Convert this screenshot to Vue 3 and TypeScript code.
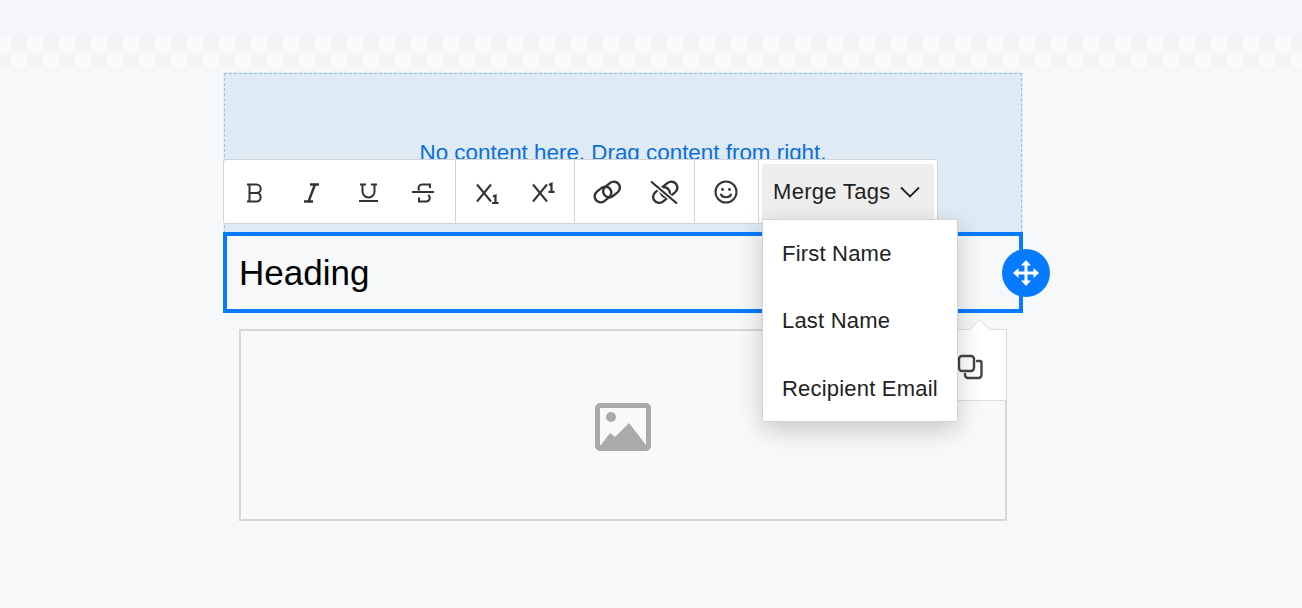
<script setup lang="ts">
const tags: string[] = ['First Name', 'Last Name', 'Recipient Email']
</script>

<template>
  <div class="page">
    <div class="checker"></div>
    <div class="canvas">
      <div class="drop">No content here. Drag content from right.</div>
      <div class="heading">Heading</div>
      <div class="imgwrap">
        <div class="imgbox">
          <svg class="imgicon" width="58" height="50" viewBox="0 0 58 50">
            <path fill="#aaa" fill-rule="evenodd" d="M6 1h46a5 5 0 0 1 5 5v38a5 5 0 0 1-5 5H6a5 5 0 0 1-5-5V6a5 5 0 0 1 5-5zM6 6v37h46V6z"/>
            <circle cx="17" cy="15" r="5" fill="#aaa"/>
            <path fill="#aaa" d="M7 43l9-12 5 4 14-14 17 22z"/>
          </svg>
        </div>
      </div>

      <div class="mini">
        <svg width="28" height="28" viewBox="0 0 28 28" fill="none" stroke="#444" stroke-width="2.400">
          <rect x="2" y="2" width="15" height="15" rx="3"/>
          <path d="M20 7h3a1.500 1.500 0 0 1 1.500 1.500V21a3 3 0 0 1-3 3H11a3 3 0 0 1-3-3v-1" stroke-linecap="round"/>
        </svg>
      </div>

      <div class="toolbar">
        <div class="group g1">
          <span class="ic">
            <svg class="glyph" width="32" height="24" viewBox="0 0 32 24">
              <path d="M8 4.500h9.500a4 4 0 0 1 0 8.500H10.500M10.500 13H18a4.300 4.300 0 0 1 0 8.500H8M10.500 4.500v17"/>
            </svg>
          </span>
          <span class="ic">
            <svg class="glyph" width="32" height="24" viewBox="0 0 32 24">
              <path d="M15 4.500h9M9 21.500h9M20 4.500l-6.500 17" stroke-width="2.400"/>
            </svg>
          </span>
          <span class="ic">
            <svg class="glyph" width="32" height="24" viewBox="0 0 32 24">
              <path d="M9 4.500h6M20 4.500h6M11.500 4.500v7a6 6 0 0 0 12 0v-7M8 21h19"/>
            </svg>
          </span>
          <span class="ic">
            <svg class="glyph" width="32" height="24" viewBox="0 0 32 24">
              <path d="M5 12h22M23 8V4.500h-8a3.500 3.500 0 0 0-2.500 6M21 15a3.500 3.500 0 0 1-2 6.500h-7v-4"/>
            </svg>
          </span>
        </div>
        <div class="group g2">
          <span class="ic">
            <svg class="glyph" width="32" height="24" viewBox="0 0 32 24">
              <path d="M6 4.500l14 17M20 4.500l-14 17"/>
              <path d="M22 16.500l2.500-1v8M21 23h6.500" stroke-width="2.200"/>
            </svg>
          </span>
          <span class="ic">
            <svg class="glyph" width="32" height="24" viewBox="0 0 32 24">
              <path d="M6 4.500l14 17M20 4.500l-14 17"/>
              <path d="M22 5l2.500-1.200V12M21.500 11.800h6" stroke-width="2.200"/>
            </svg>
          </span>
        </div>
        <div class="group g3">
          <span class="ic">
            <svg class="glyph" width="32" height="24" viewBox="0 0 32 24">
              <rect x="4" y="8.500" width="18" height="12" rx="6" transform="rotate(-38 13 14.500)" stroke-width="2.400"/>
              <rect x="12.500" y="3.500" width="18" height="12" rx="6" transform="rotate(-38 21.500 9.500)" stroke-width="2.400"/>
            </svg>
          </span>
          <span class="ic">
            <svg class="glyph" width="32" height="24" viewBox="0 0 32 24">
              <rect x="3.500" y="9" width="18" height="12" rx="6" transform="rotate(-38 12.500 15)" stroke-width="2.400"/>
              <rect x="11" y="3.500" width="18" height="12" rx="6" transform="rotate(-38 20 9.500)" stroke-width="2.400"/>
              <path d="M2 1.500L28 23.500" stroke="#fff" stroke-width="5"/>
              <path d="M2 1.500L28 23.500" stroke-width="2.200"/>
            </svg>
          </span>
        </div>
        <div class="group g4">
          <span class="ic">
            <svg width="24" height="24" viewBox="0 0 24 24" fill="none" stroke="#333" stroke-width="2">
              <circle cx="12" cy="12" r="10.500"/>
              <circle cx="8.500" cy="9.500" r="1.400" fill="#333" stroke="none"/>
              <circle cx="15.500" cy="9.500" r="1.400" fill="#333" stroke="none"/>
              <path d="M7 14.500c1.500 3.500 8.500 3.500 10 0" stroke-linecap="round"/>
            </svg>
          </span>
        </div>
        <div class="merge">
          <span>Merge Tags</span>
          <svg width="20" height="12" viewBox="0 0 20 12" fill="none" stroke="#222" stroke-width="1.800">
            <path d="M1 1.500l9 9 9-9"/>
          </svg>
        </div>
      </div>

      <div class="menu">
        <div v-for="t in tags" :key="t" class="item">{{ t }}</div>
      </div>

      <div class="handle">
        <svg width="28" height="28" viewBox="0 0 28 28" fill="#fff">
          <path d="M14 1l5 5.500h-3.500v6h6V9l5.500 5-5.500 5v-3.500h-6v6H19L14 27l-5-5.500h3.500v-6h-6V19L1 14l5.500-5v3.500h6v-6H9z"/>
        </svg>
      </div>
    </div>
  </div>
</template>

<style scoped>
.page {
  height: 608px;
  box-sizing: border-box;
  padding-top: 37px;
  background: linear-gradient(#f4f6f9, #f4f6f9 37px, #f7f8fa 72px);
  font-family: "Liberation Sans", Arial, sans-serif;
  overflow: hidden;
}
.checker {
  height: 35px;
  background-color: #fafafa;
  background-image:
    linear-gradient(45deg, #f4f4f4 25%, transparent 25%, transparent 75%, #f4f4f4 75%),
    linear-gradient(45deg, #f4f4f4 25%, transparent 25%, transparent 75%, #f4f4f4 75%);
  background-size: 32px 32px;
  background-position: -5px 0, 11px 16px;
}
.canvas {
  position: relative;
  width: 800px;
  margin-left: 223px;
  padding-top: 1px;
}
.drop {
  box-sizing: border-box;
  height: 160px;
  margin: 0 1px;
  padding-top: 68px;
  border: 1px dashed #98c4e4;
  background: #deeaf4;
  box-shadow: 0 0 0 1px #e2edf6;
  text-align: center;
  color: #0b6fdc;
  font-size: 22.400px;
  line-height: 22px;
}
.heading {
  box-sizing: border-box;
  height: 81px;
  margin-top: -1px;
  padding: 14px 12px;
  border: 4px solid #067bff;
  font-size: 35px;
  line-height: 45px;
  color: #000;
}
.imgwrap {
  padding: 16px 16px 0;
}
.imgbox {
  box-sizing: border-box;
  height: 192px;
  border: 2px solid #d6d6d6;
  background: #f9f9f9;
  display: flex;
  align-items: center;
  justify-content: center;
}
.imgicon {
  display: block;
  margin-top: 3px;
}
.mini {
  position: absolute;
  top: 257px;
  left: 700px;
  width: 84px;
  height: 72px;
  box-sizing: border-box;
  border: 1px solid #ddd;
  background: #fff;
  display: flex;
  align-items: center;
  justify-content: flex-start;
  padding-left: 33px;
}
.mini::before {
  content: "";
  position: absolute;
  top: -8px;
  left: 48px;
  width: 14px;
  height: 14px;
  background: #fff;
  border-top: 1px solid #ddd;
  border-left: 1px solid #ddd;
  transform: rotate(45deg);
}
.mini svg {
  position: relative;
  margin-top: 5px;
}
.toolbar {
  position: absolute;
  top: 87px;
  left: 0;
  box-sizing: border-box;
  width: 715px;
  height: 65px;
  display: flex;
  background: #fff;
  border: 1px solid #d4d4d4;
  border-radius: 3px;
}
.group {
  display: flex;
  align-items: center;
  box-sizing: border-box;
  border-right: 1px solid #d4d4d4;
  height: 100%;
}
.ic {
  display: flex;
  align-items: center;
  justify-content: center;
}
.glyph {
  fill: none;
  stroke: #333;
  stroke-width: 2;
}
.g1 { width: 232px; padding-left: 3px; }
.g1 .ic { width: 56px; }
.g2 { width: 119px; padding-left: 3px; }
.g2 .ic { width: 56px; }
.g3 { width: 120px; padding-left: 3px; }
.g3 .ic { width: 56px; }
.g3 .ic + .ic { margin-left: 3px; }
.g4 { width: 64px; }
.g4 .ic { width: 61px; }
.merge {
  box-sizing: border-box;
  width: 172px;
  height: 56px;
  margin: 4px 0 0 3px;
  padding-left: 11px;
  background: #eeeeee;
  border-radius: 3px 3px 0 0;
  display: flex;
  align-items: center;
  gap: 9px;
  font-size: 22px;
  letter-spacing: 0.300px;
  color: #222;
}
.menu {
  position: absolute;
  top: 147px;
  left: 539px;
  box-sizing: border-box;
  width: 196px;
  height: 203px;
  display: grid;
  grid-template-rows: 67px 67px 68px;
  background: #fff;
  border: 1px solid #d4d4d4;
  box-shadow: 0 8px 24px rgba(0, 0, 0, 0.2);
}
.item {
  display: flex;
  align-items: center;
  padding-left: 19px;
  font-size: 22px;
  letter-spacing: 0.200px;
  color: #222;
  white-space: nowrap;
}
.item:last-child {
  padding-top: 2px;
}
.handle {
  position: absolute;
  top: 177px;
  left: 779px;
  width: 48px;
  height: 48px;
  border-radius: 50%;
  background: #067bff;
  display: flex;
  align-items: center;
  justify-content: center;
}
</style>
